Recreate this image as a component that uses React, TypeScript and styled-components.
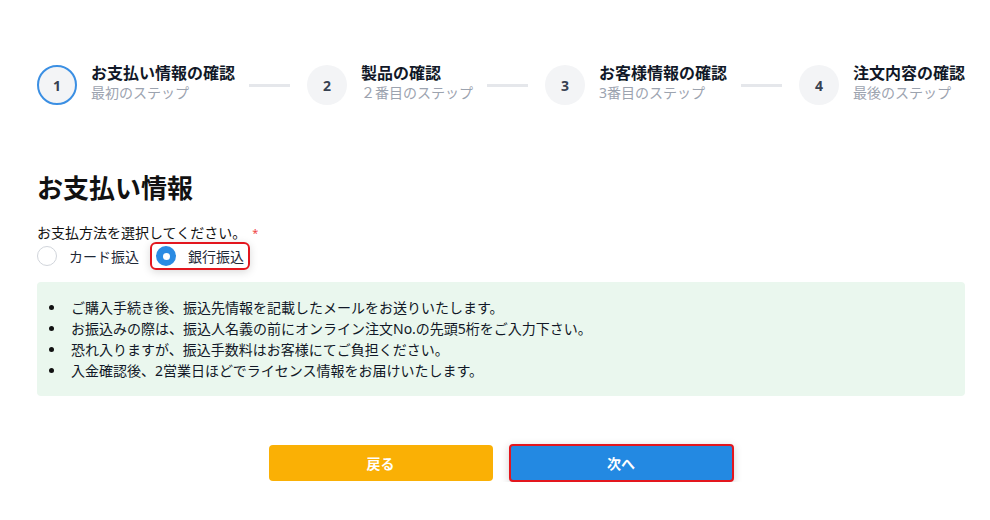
import React, { useState } from "react";
import styled, { createGlobalStyle, css } from "styled-components";

const GlobalStyle = createGlobalStyle`
  * { box-sizing: border-box; }
  body {
    margin: 0;
    background: #ffffff;
    font-family: "Noto Sans", "Noto Sans CJK JP", sans-serif;
    color: #111827;
  }
`;

const Page = styled.div`
  width: 990px;
  padding: 65px 25px 0 37px;
`;

const Stepper = styled.div`
  display: flex;
  align-items: center;
`;

const Step = styled.div`
  display: flex;
  align-items: flex-start;
  gap: 14px;
  height: 40px;
  flex: none;
`;

const Circle = styled.div<{ $active?: boolean }>`
  width: 40px;
  height: 40px;
  border-radius: 50%;
  background: #f3f4f6;
  display: flex;
  align-items: center;
  justify-content: center;
  font-weight: 700;
  font-size: 14px;
  color: #374151;
  flex: none;
  ${(p) =>
    p.$active &&
    css`
      border: 2px solid #3b8fe3;
    `}
`;

const StepText = styled.div`
  display: flex;
  flex-direction: column;
  margin-top: -2px;
`;

const StepTitle = styled.div`
  font-size: 16px;
  line-height: 20px;
  font-weight: 700;
  color: #111827;
  white-space: nowrap;
`;

const StepSub = styled.div`
  font-size: 14px;
  line-height: 18px;
  margin-top: 1px;
  color: #9ca3af;
  white-space: nowrap;
`;

const Connector = styled.div`
  flex: 1;
  height: 3px;
  background: #e5e7eb;
  margin: 0 17px 0 14px;
`;

const Heading = styled.h2`
  margin: 67px 0 0;
  font-size: 26px;
  line-height: 32px;
  font-weight: 700;
  color: #111;
`;

const FieldLabel = styled.div`
  margin-top: 19px;
  font-size: 14px;
  line-height: 20px;
  color: #111;
`;

const Required = styled.span`
  color: #ef4444;
  font-size: 11px;
  vertical-align: top;
  margin-left: 6px;
`;

const RadioRow = styled.div`
  display: flex;
  align-items: center;
  gap: 11px;
  height: 28px;
  margin-top: -1px;
`;

const RadioOption = styled.label<{ $focused?: boolean }>`
  display: flex;
  align-items: center;
  gap: 12px;
  height: 28px;
  font-size: 14px;
  color: #1f2937;
  cursor: pointer;
  ${(p) =>
    p.$focused &&
    css`
      border: 2px solid #e3161e;
      border-radius: 6px;
      padding: 0 4px 0 4px;
      box-shadow: 0 2px 8px rgba(0, 0, 0, 0.15);
    `}
`;

const RadioDot = styled.span<{ $checked?: boolean }>`
  width: 20px;
  height: 20px;
  border-radius: 50%;
  flex: none;
  ${(p) =>
    p.$checked
      ? css`
          background: #2b8be3;
          display: flex;
          align-items: center;
          justify-content: center;
          &::after {
            content: "";
            width: 7px;
            height: 7px;
            border-radius: 50%;
            background: #fff;
          }
        `
      : css`
          background: #fff;
          border: 1px solid #d1d5db;
        `}
`;

const Notice = styled.div`
  margin-top: 12px;
  background: #eaf7ee;
  border-radius: 4px;
  padding: 15px 16px 15px;
`;

const NoticeList = styled.ul`
  margin: 0;
  padding: 0;
  list-style: none;
`;

const NoticeItem = styled.li`
  display: flex;
  align-items: center;
  font-size: 14px;
  line-height: 21px;
  color: #111827;
  &::before {
    content: "";
    width: 5px;
    height: 5px;
    border-radius: 50%;
    background: #111;
    margin: 0 17px 0 -4px;
    flex: none;
  }
`;

const Actions = styled.div`
  display: flex;
  justify-content: center;
  align-items: center;
  gap: 16px;
  margin-top: 48px;
`;

const Button = styled.button<{ $variant: "back" | "next" }>`
  width: 224px;
  height: 36px;
  border: none;
  border-radius: 4px;
  font-family: inherit;
  font-size: 14px;
  font-weight: 700;
  color: #fff;
  cursor: pointer;
  ${(p) =>
    p.$variant === "back"
      ? css`
          background: #fab005;
        `
      : css`
          width: 225px;
          height: 38px;
          background: #2389e2;
          border: 2px solid #e3161e;
          box-shadow: 0 2px 8px rgba(0, 0, 0, 0.18);
        `}
`;

const steps = [
  { no: 1, title: "お支払い情報の確認", sub: "最初のステップ" },
  { no: 2, title: "製品の確認", sub: "２番目のステップ" },
  { no: 3, title: "お客様情報の確認", sub: "3番目のステップ" },
  { no: 4, title: "注文内容の確認", sub: "最後のステップ" },
];

const notes = [
  "ご購入手続き後、振込先情報を記載したメールをお送りいたします。",
  "お振込みの際は、振込人名義の前にオンライン注文No.の先頭5桁をご入力下さい。",
  "恐れ入りますが、振込手数料はお客様にてご負担ください。",
  "入金確認後、2営業日ほどでライセンス情報をお届けいたします。",
];

export default function App() {
  const [method, setMethod] = useState<"card" | "bank">("bank");

  return (
    <>
      <GlobalStyle />
      <Page>
        <Stepper>
          {steps.map((s, i) => (
            <React.Fragment key={s.no}>
              {i > 0 && <Connector />}
              <Step>
                <Circle $active={i === 0}>{s.no}</Circle>
                <StepText>
                  <StepTitle>{s.title}</StepTitle>
                  <StepSub>{s.sub}</StepSub>
                </StepText>
              </Step>
            </React.Fragment>
          ))}
        </Stepper>

        <Heading>お支払い情報</Heading>

        <FieldLabel>
          お支払方法を選択してください。<Required>*</Required>
        </FieldLabel>
        <RadioRow>
          <RadioOption onClick={() => setMethod("card")} $focused={method === "card"}>
            <RadioDot $checked={method === "card"} />
            カード振込
          </RadioOption>
          <RadioOption onClick={() => setMethod("bank")} $focused={method === "bank"}>
            <RadioDot $checked={method === "bank"} />
            銀行振込
          </RadioOption>
        </RadioRow>

        <Notice>
          <NoticeList>
            {notes.map((n) => (
              <NoticeItem key={n}>{n}</NoticeItem>
            ))}
          </NoticeList>
        </Notice>

        <Actions>
          <Button $variant="back">戻る</Button>
          <Button $variant="next">次へ</Button>
        </Actions>
      </Page>
    </>
  );
}
